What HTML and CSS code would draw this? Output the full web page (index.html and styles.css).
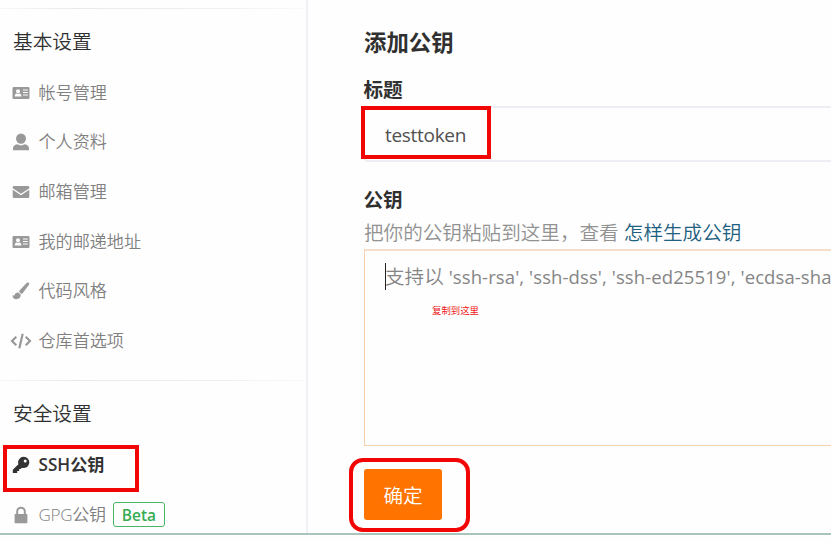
FILE: index.html
```
<!DOCTYPE html>
<html lang="zh-CN">
<head>
<meta charset="utf-8">
<title>SSH公钥</title>
<link rel="stylesheet" href="styles.css">
</head>
<body>
<svg class="defs" width="0" height="0">
  <symbol id="card" viewBox="0 0 18 14"><path fill-rule="evenodd" d="M1.5 1h15A1.2 1.2 0 0 1 17.5 2.200v9.600a1.200 1.200 0 0 1-1.200 1.200H1.700A1.200 1.200 0 0 1 .5 11.800V2.200A1.200 1.200 0 0 1 1.500 1zM6 3.200a2 2 0 1 0 0 4 2 2 0 0 0 0-4zM2.700 10.500h6.800c0-1.800-.7-2.900-2.100-3.100a2.500 2.500 0 0 1-2.700 0c-1.400.2-2 1.300-2 3.100zM11 3.500v1h4.800v-1zM11 6v1h4.800V6zM11 8.500v1h4.800v-1z"/></symbol>
  <symbol id="user" viewBox="0 0 18 18"><ellipse cx="9" cy="5.600" rx="5" ry="5.200"/><path d="M1 17.300v-1.800c0-2.400 1.500-3.600 4.300-4.200 2.200 1.500 5.200 1.500 7.400 0 2.800.6 4.300 1.800 4.300 4.200v1.800z"/></symbol>
  <symbol id="mail" viewBox="0 0 18 14"><path d="M2 1h14a1.300 1.300 0 0 1 1.300 1.300v.9L9 8.700.7 3.200v-.9A1.300 1.300 0 0 1 2 1zM.7 4.700 9 10.200l8.300-5.500v7A1.300 1.300 0 0 1 16 13H2a1.300 1.300 0 0 1-1.300-1.300z"/></symbol>
  <symbol id="brush" viewBox="0 0 18 18"><path d="M16.900.9c-.9-.7-1.800-.4-2.600.4L7.600 8.600c-.6.700-.5 1.200.1 1.800l1.200 1.100c.7.5 1.200.4 1.700-.3l6.200-8.300c.5-.8.700-1.500.1-2zM6.300 10.400l2.400 2.200c.3 2.800-1.700 4.700-4.500 4.700-2.200 0-3.600-1.200-3.700-4.300 1 .8 1.700.8 2.200-.3.600-1.500 1.800-2.400 3.600-2.300z"/></symbol>
  <symbol id="code" viewBox="0 0 22 18"><path d="M6.300 4.800 2 9l4.300 4.200M15.700 4.800 20 9l-4.300 4.200M12.700 1.700 9.300 16.300" fill="none" stroke="currentColor" stroke-width="2.200"/></symbol>
  <symbol id="key" viewBox="0 0 18 18"><path fill-rule="evenodd" d="M11.700.8a5.600 5.600 0 0 0-5.300 7.400L.8 13.800v3.300h4.400v-2h2v-2.200h1.500l1.200-1.200A5.600 5.600 0 1 0 11.700.8zm1.500 2.600a1.500 1.500 0 1 1 0 3 1.500 1.500 0 0 1 0-3z"/></symbol>
  <symbol id="lock" viewBox="0 0 18 18"><path d="M5.200 9V5.500a3.800 3.800 0 0 1 7.600 0V9" fill="none" stroke="currentColor" stroke-width="2"/><rect x="2.600" y="8" width="12.800" height="9.300" rx=".8"/></symbol>
</svg>
<div class="page">
  <aside class="sidebar">
    <section class="group">
      <h2 class="group-title">基本设置</h2>
      <a class="item"><svg class="icon card"><use href="#card"/></svg>帐号管理</a>
      <a class="item"><svg class="icon"><use href="#user"/></svg>个人资料</a>
      <a class="item"><svg class="icon card"><use href="#mail"/></svg>邮箱管理</a>
      <a class="item"><svg class="icon card"><use href="#card"/></svg>我的邮递地址</a>
      <a class="item"><svg class="icon"><use href="#brush"/></svg>代码风格</a>
      <a class="item"><svg class="icon code"><use href="#code"/></svg>仓库首选项</a>
    </section>
    <section class="group security">
      <h2 class="group-title">安全设置</h2>
      <a class="item active"><svg class="icon"><use href="#key"/></svg>SSH公钥<span class="mark mark-nav"></span></a>
      <a class="item"><svg class="icon"><use href="#lock"/></svg><span class="gpg">GPG公钥</span><span class="beta">Beta</span></a>
    </section>
  </aside>
  <main class="main">
    <h1 class="title">添加公钥</h1>
    <div class="label">标题</div>
    <div class="input">testtoken<span class="mark mark-input"></span></div>
    <div class="label key-label">公钥</div>
    <p class="help">把你的公钥粘贴到这里，查看 <a class="link">怎样生成公钥</a></p>
    <div class="textarea"><span class="caret"></span><span class="cjk">支持以</span> 'ssh-rsa', 'ssh-dss', 'ssh-ed25519', 'ecdsa-sha<span class="note">复制到这里</span></div>
    <div class="actions"><div class="button">确定</div><span class="mark mark-button"></span></div>
  </main>
</div>
</body>
</html>
```
FILE: styles.css
```
* { box-sizing: border-box; }
body { margin: 0; background: #fefefe; overflow: hidden; font-family: "Open Sans", "Noto Sans CJK SC", sans-serif; color: #404040; }
.defs { position: absolute; }
.page { display: flex; width: 831px; height: 535px; overflow: hidden; border-bottom: 2px solid #a9c3bd; }
.sidebar { flex: 0 0 308px; padding-top: 8px; border-right: 2px solid #f0f0f5; }
.group { margin-bottom: 14px; border-top: 1px solid #ebebeb; border-image: linear-gradient(90deg, #f7f7f7, #e9e9e9 25%, #f0f0f0 75%, #fafafa) 1; }
.group-title { margin: 0; height: 59px; padding: 7px 0 0 13px; font-size: 19.7px; line-height: 52px; font-weight: 350; color: #303030; }
.item { position: relative; display: flex; align-items: center; height: 49.6px; padding: 0 0 0 12px; font-size: 17.1px; line-height: 24px; font-weight: 350; color: #808080; white-space: nowrap; }
.icon { width: 18px; height: 18px; margin-right: 8.500px; fill: #999; color: #999; flex: none; }
.card { height: 14px; }
.code { width: 22px; margin: 0 6.500px 0 -2px; }
.code use { fill: none; }
.security .item { padding-top: 2px; }
.active { font-weight: 600; color: #333; }
.active .icon { fill: #333; }
.gpg { letter-spacing: -.3px; }
.beta { display: flex; align-items: center; justify-content: center; width: 52px; height: 25px; margin: 0 0 0 7px; border: 1.500px solid #48b562; border-radius: 3px; color: #36ac54; font-size: 15.500px; font-weight: 600; }
.main { flex: 1; min-width: 0; padding: 22px 0 0 56px; }
.title { margin: 0; font-size: 22.400px; line-height: 42px; font-weight: 600; color: #303030; }
.label { margin-top: 10px; height: 32px; font-size: 19.600px; line-height: 32px; font-weight: 600; color: #303030; text-indent: -.5px; }
.input { position: relative; height: 56px; padding-left: 20px; border: 2px solid #ededf3; border-left-width: 1px; border-right: 0; border-radius: 4px 0 0 4px; font-size: 19px; line-height: 54px; letter-spacing: -.3px; color: #505050; }
.key-label { margin-top: 22px; }
.help { margin: 0; height: 33px; font-size: 19.600px; line-height: 33px; font-weight: 350; color: #929292; white-space: nowrap; }
.link { color: #1d6080; }
.textarea { position: relative; height: 197px; padding: 10px 0 0 20px; border: 1px solid #f5d0ae; border-top: 2px solid #f6dfca; border-right: 0; font-size: 18.500px; line-height: 32px; letter-spacing: .1px; color: #858585; white-space: nowrap; }
.cjk { font-size: 19.600px; font-weight: 350; letter-spacing: 0; }
.caret { position: absolute; left: 20px; top: 12px; width: 1px; height: 27px; background: #222; }
.note { position: absolute; left: 67px; top: 51px; font-size: 9.400px; line-height: 18px; letter-spacing: 0; color: #f01818; }
.actions { position: relative; padding-top: 23px; }
.button { width: 78px; height: 51px; border-radius: 3px; background: #ff7300; color: #fff; font-size: 19.600px; font-weight: 350; line-height: 53px; text-align: center; }
.mark { position: absolute; border: 4px solid #f20505; }
.mark-nav { left: 3px; top: 5px; width: 136px; height: 47px; }
.mark-input { left: -4px; top: -2px; width: 130px; height: 53px; }
.mark-button { left: -15px; top: 12px; width: 121px; height: 74px; border-radius: 14px; }
```
